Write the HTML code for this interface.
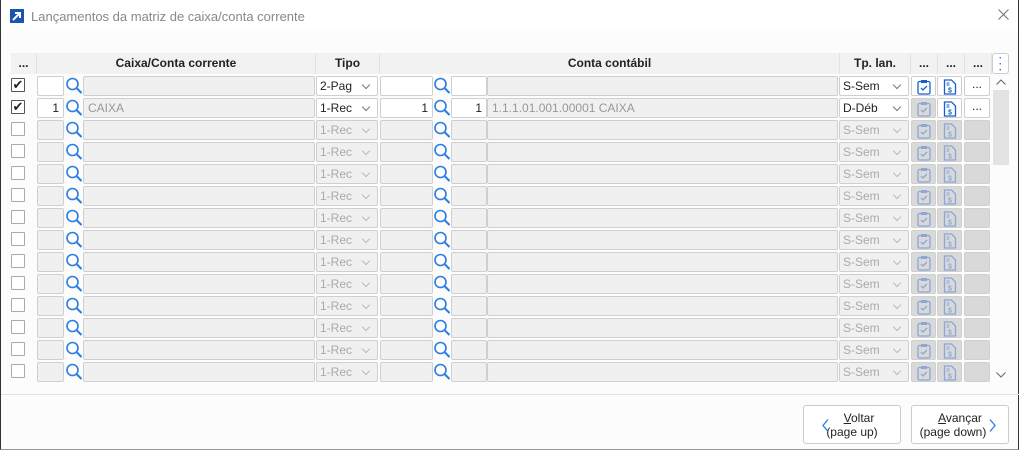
<!DOCTYPE html><html><head><meta charset="utf-8"><style>
*{box-sizing:border-box;margin:0;padding:0}
body{width:1033px;height:457px;background:#fff;font-family:"Liberation Sans",sans-serif;font-size:12px;color:#222;position:relative;overflow:hidden}
.dlg{position:absolute;left:0;top:0;width:1019px;height:450px;background:#fcfcfc;border-left:1px solid #333;border-right:1px solid #333;border-bottom:1px solid #999}
.tb{position:absolute;left:0;top:0;right:0;height:31px;background:#fff}
.logo{position:absolute;left:9px;top:9px;width:14px;height:14px;background:#1a56b0}
.title{position:absolute;left:30px;top:9px;color:#888;font-size:13px}
.a{position:absolute}
.h{position:absolute;top:53px;height:21px;background:#f2f2f2;border-right:1px solid #e2e2e2;font-weight:bold;text-align:center;line-height:21px;font-size:12px;color:#222}
.r{position:absolute;left:-1px;width:1000px;height:22px}
.r>*{position:absolute;top:1px;height:20px;border:1px solid #cfcfcf;border-radius:2px;background:#f0f0f0}
.cb{left:11px!important;top:3px!important;width:14px!important;height:14px!important;border:1px solid #555!important;background:#fff!important;border-radius:1px!important;font-size:13px;line-height:12px;text-align:center}
.off .cb{border-color:#aaa!important}
.i1{left:37px;width:27px;text-align:right;padding-right:4px;line-height:18px}
.mg{left:65px;width:18px;border:none!important;background:none!important}
.d1{left:83px;width:232px;color:#999;padding-left:4px;line-height:18px}
.s1{left:316px;width:62px;padding-left:3px;line-height:18px}
.i2{left:380px;width:53px;text-align:right;padding-right:4px;line-height:18px}
.m2{left:433px}
.i3{left:451px;width:36px;text-align:right;padding-right:4px;line-height:18px}
.d2{left:487px;width:351px;color:#999;padding-left:4px;line-height:18px}
.s2{left:839px;width:70px;padding-left:3px;line-height:18px}
.b1{left:911px;width:25px}.b2{left:937px;width:25px}.b3{left:964px;width:26px;text-align:center;line-height:14px}
.on .i1,.on .i2,.on .i3,.on .s1,.on .s2,.on .b1,.on .b2,.on .b3{background:#fff}
.off .s1,.off .s2{color:#aaa}
.off .b1,.off .b2,.off .b3{background:#d9d9d9}
.r>.sel::after{content:"";position:absolute;right:8px;top:5px;width:5px;height:5px;border-right:1px solid #777;border-bottom:1px solid #777;transform:rotate(45deg)}
.off .sel::after{border-color:#bbb}
.b1 svg,.b2 svg{position:absolute;left:5px;top:2px}
.off .b1 svg,.off .b2 svg{opacity:.4}
.btn{position:absolute;top:405px;width:98px;height:39px;border:1px solid #ccc;border-radius:3px;background:#fff;text-align:center;font-size:12px;line-height:14px;padding-top:5px;color:#222}
.btn svg{position:absolute;top:13px}
</style></head><body>
<div class="dlg">
<div class="tb"><div class="logo"><svg width="14" height="14"><path d="M3 11L10 4M5 4h5v5" stroke="#fff" stroke-width="2" fill="none"/></svg></div>
<div class="title">Lançamentos da matriz de caixa/conta corrente</div>
<svg class="a" style="left:997px;top:9px" width="11" height="11"><path d="M0.5 0.5l10 10M10.5 0.5l-10 10" stroke="#777" stroke-width="1.1"/></svg></div>
<div class="h" style="left:10px;width:26px">...</div>
<div class="h" style="left:36px;width:279px">Caixa/Conta corrente</div>
<div class="h" style="left:315px;width:64px">Tipo</div>
<div class="h" style="left:379px;width:460px">Conta contábil</div>
<div class="h" style="left:839px;width:71px">Tp. lan.</div>
<div class="h" style="left:910px;width:27px">...</div>
<div class="h" style="left:937px;width:27px">...</div>
<div class="h" style="left:964px;width:27px">...</div>
<div class="a" style="left:991px;top:53px;width:17px;height:21px;border:1px solid #ccc;border-radius:3px;background:#fff;color:#2a7de1;text-align:center;font-weight:bold;line-height:6px;font-size:10px;padding-top:2px">·<br>·<br>·</div>
<div class="a" style="left:992px;top:90px;width:16px;height:75px;background:#e3e3e3"></div>
<svg class="a" style="left:995px;top:79px" width="10" height="6"><path d="M0.5 5.5l4.5-4.5 4.5 4.5" stroke="#666" fill="none"/></svg>
<svg class="a" style="left:995px;top:372px" width="10" height="6"><path d="M0.5 0.5l4.5 4.5 4.5-4.5" stroke="#666" fill="none"/></svg>
<svg width="0" height="0" style="position:absolute"><defs>
<symbol id="m" viewBox="0 0 18 20"><circle cx="7.5" cy="8" r="5.5" stroke="#2a7de1" stroke-width="1.6" fill="none"/><path d="M11.5 12l5 5" stroke="#2a7de1" stroke-width="2"/></symbol>
<symbol id="c" viewBox="0 0 14 16"><rect x="1" y="2.5" width="12" height="12.5" rx="1.5" stroke="#1a5fd0" stroke-width="1.3" fill="none"/><rect x="4" y="1" width="6" height="3" fill="#1a5fd0"/><path d="M4 9l2 2 4-4" stroke="#1a5fd0" stroke-width="1.3" fill="none"/></symbol>
<symbol id="s" viewBox="0 0 14 16"><path d="M1.5 1h7l4 4v10h-11z" stroke="#1a5fd0" stroke-width="1.3" fill="none"/><path d="M3.5 4h3M3.5 6h3" stroke="#1a5fd0"/><text x="7" y="13.5" font-size="7" font-weight="bold" fill="#1a5fd0" text-anchor="middle" font-family="Liberation Sans">$</text></symbol>
</defs></svg>
<div class="r on" style="top:75px"><div class="cb">✔</div><div class="i1"></div><svg class="mg" width="18" height="20"><use href="#m"/></svg><div class="d1"></div><div class="s1 sel">2-Pag</div><div class="i2"></div><svg class="mg m2" width="18" height="20"><use href="#m"/></svg><div class="i3"></div><div class="d2"></div><div class="s2 sel">S-Sem</div><div class="b1"><svg width="14" height="16"><use href="#c"/></svg></div><div class="b2"><svg width="14" height="16"><use href="#s"/></svg></div><div class="b3">...</div></div>
<div class="r on" style="top:97px"><div class="cb">✔</div><div class="i1">1</div><svg class="mg" width="18" height="20"><use href="#m"/></svg><div class="d1">CAIXA</div><div class="s1 sel">1-Rec</div><div class="i2">1</div><svg class="mg m2" width="18" height="20"><use href="#m"/></svg><div class="i3">1</div><div class="d2">1.1.1.01.001.00001 CAIXA</div><div class="s2 sel">D-Déb</div><div class="b1" style="background:#d9d9d9"><svg width="14" height="16" style="opacity:.4"><use href="#c"/></svg></div><div class="b2"><svg width="14" height="16"><use href="#s"/></svg></div><div class="b3">...</div></div>
<div class="r off" style="top:119px"><div class="cb"></div><div class="i1"></div><svg class="mg" width="18" height="20"><use href="#m"/></svg><div class="d1"></div><div class="s1 sel">1-Rec</div><div class="i2"></div><svg class="mg m2" width="18" height="20"><use href="#m"/></svg><div class="i3"></div><div class="d2"></div><div class="s2 sel">S-Sem</div><div class="b1"><svg width="14" height="16"><use href="#c"/></svg></div><div class="b2"><svg width="14" height="16"><use href="#s"/></svg></div><div class="b3"></div></div>
<div class="r off" style="top:141px"><div class="cb"></div><div class="i1"></div><svg class="mg" width="18" height="20"><use href="#m"/></svg><div class="d1"></div><div class="s1 sel">1-Rec</div><div class="i2"></div><svg class="mg m2" width="18" height="20"><use href="#m"/></svg><div class="i3"></div><div class="d2"></div><div class="s2 sel">S-Sem</div><div class="b1"><svg width="14" height="16"><use href="#c"/></svg></div><div class="b2"><svg width="14" height="16"><use href="#s"/></svg></div><div class="b3"></div></div>
<div class="r off" style="top:163px"><div class="cb"></div><div class="i1"></div><svg class="mg" width="18" height="20"><use href="#m"/></svg><div class="d1"></div><div class="s1 sel">1-Rec</div><div class="i2"></div><svg class="mg m2" width="18" height="20"><use href="#m"/></svg><div class="i3"></div><div class="d2"></div><div class="s2 sel">S-Sem</div><div class="b1"><svg width="14" height="16"><use href="#c"/></svg></div><div class="b2"><svg width="14" height="16"><use href="#s"/></svg></div><div class="b3"></div></div>
<div class="r off" style="top:185px"><div class="cb"></div><div class="i1"></div><svg class="mg" width="18" height="20"><use href="#m"/></svg><div class="d1"></div><div class="s1 sel">1-Rec</div><div class="i2"></div><svg class="mg m2" width="18" height="20"><use href="#m"/></svg><div class="i3"></div><div class="d2"></div><div class="s2 sel">S-Sem</div><div class="b1"><svg width="14" height="16"><use href="#c"/></svg></div><div class="b2"><svg width="14" height="16"><use href="#s"/></svg></div><div class="b3"></div></div>
<div class="r off" style="top:207px"><div class="cb"></div><div class="i1"></div><svg class="mg" width="18" height="20"><use href="#m"/></svg><div class="d1"></div><div class="s1 sel">1-Rec</div><div class="i2"></div><svg class="mg m2" width="18" height="20"><use href="#m"/></svg><div class="i3"></div><div class="d2"></div><div class="s2 sel">S-Sem</div><div class="b1"><svg width="14" height="16"><use href="#c"/></svg></div><div class="b2"><svg width="14" height="16"><use href="#s"/></svg></div><div class="b3"></div></div>
<div class="r off" style="top:229px"><div class="cb"></div><div class="i1"></div><svg class="mg" width="18" height="20"><use href="#m"/></svg><div class="d1"></div><div class="s1 sel">1-Rec</div><div class="i2"></div><svg class="mg m2" width="18" height="20"><use href="#m"/></svg><div class="i3"></div><div class="d2"></div><div class="s2 sel">S-Sem</div><div class="b1"><svg width="14" height="16"><use href="#c"/></svg></div><div class="b2"><svg width="14" height="16"><use href="#s"/></svg></div><div class="b3"></div></div>
<div class="r off" style="top:251px"><div class="cb"></div><div class="i1"></div><svg class="mg" width="18" height="20"><use href="#m"/></svg><div class="d1"></div><div class="s1 sel">1-Rec</div><div class="i2"></div><svg class="mg m2" width="18" height="20"><use href="#m"/></svg><div class="i3"></div><div class="d2"></div><div class="s2 sel">S-Sem</div><div class="b1"><svg width="14" height="16"><use href="#c"/></svg></div><div class="b2"><svg width="14" height="16"><use href="#s"/></svg></div><div class="b3"></div></div>
<div class="r off" style="top:273px"><div class="cb"></div><div class="i1"></div><svg class="mg" width="18" height="20"><use href="#m"/></svg><div class="d1"></div><div class="s1 sel">1-Rec</div><div class="i2"></div><svg class="mg m2" width="18" height="20"><use href="#m"/></svg><div class="i3"></div><div class="d2"></div><div class="s2 sel">S-Sem</div><div class="b1"><svg width="14" height="16"><use href="#c"/></svg></div><div class="b2"><svg width="14" height="16"><use href="#s"/></svg></div><div class="b3"></div></div>
<div class="r off" style="top:295px"><div class="cb"></div><div class="i1"></div><svg class="mg" width="18" height="20"><use href="#m"/></svg><div class="d1"></div><div class="s1 sel">1-Rec</div><div class="i2"></div><svg class="mg m2" width="18" height="20"><use href="#m"/></svg><div class="i3"></div><div class="d2"></div><div class="s2 sel">S-Sem</div><div class="b1"><svg width="14" height="16"><use href="#c"/></svg></div><div class="b2"><svg width="14" height="16"><use href="#s"/></svg></div><div class="b3"></div></div>
<div class="r off" style="top:317px"><div class="cb"></div><div class="i1"></div><svg class="mg" width="18" height="20"><use href="#m"/></svg><div class="d1"></div><div class="s1 sel">1-Rec</div><div class="i2"></div><svg class="mg m2" width="18" height="20"><use href="#m"/></svg><div class="i3"></div><div class="d2"></div><div class="s2 sel">S-Sem</div><div class="b1"><svg width="14" height="16"><use href="#c"/></svg></div><div class="b2"><svg width="14" height="16"><use href="#s"/></svg></div><div class="b3"></div></div>
<div class="r off" style="top:339px"><div class="cb"></div><div class="i1"></div><svg class="mg" width="18" height="20"><use href="#m"/></svg><div class="d1"></div><div class="s1 sel">1-Rec</div><div class="i2"></div><svg class="mg m2" width="18" height="20"><use href="#m"/></svg><div class="i3"></div><div class="d2"></div><div class="s2 sel">S-Sem</div><div class="b1"><svg width="14" height="16"><use href="#c"/></svg></div><div class="b2"><svg width="14" height="16"><use href="#s"/></svg></div><div class="b3"></div></div>
<div class="r off" style="top:361px"><div class="cb"></div><div class="i1"></div><svg class="mg" width="18" height="20"><use href="#m"/></svg><div class="d1"></div><div class="s1 sel">1-Rec</div><div class="i2"></div><svg class="mg m2" width="18" height="20"><use href="#m"/></svg><div class="i3"></div><div class="d2"></div><div class="s2 sel">S-Sem</div><div class="b1"><svg width="14" height="16"><use href="#c"/></svg></div><div class="b2"><svg width="14" height="16"><use href="#s"/></svg></div><div class="b3"></div></div>
<div class="a" style="left:0;top:394px;width:1018px;height:1px;background:#e2e2e2"></div>
<div class="btn" style="left:802px"><svg style="left:18px" width="7" height="13"><path d="M6 0.5L1 6.5l5 6" stroke="#2a7de1" stroke-width="1.3" fill="none"/></svg><span style="margin-left:14px"><u>V</u>oltar<br>(page up)</span></div>
<div class="btn" style="left:910px"><span style="margin-right:14px"><u>A</u>vançar<br>(page down)</span><svg style="right:12px" width="7" height="13"><path d="M1 0.5l5 6-5 6" stroke="#2a7de1" stroke-width="1.3" fill="none"/></svg></div>
</div>
</body></html>
